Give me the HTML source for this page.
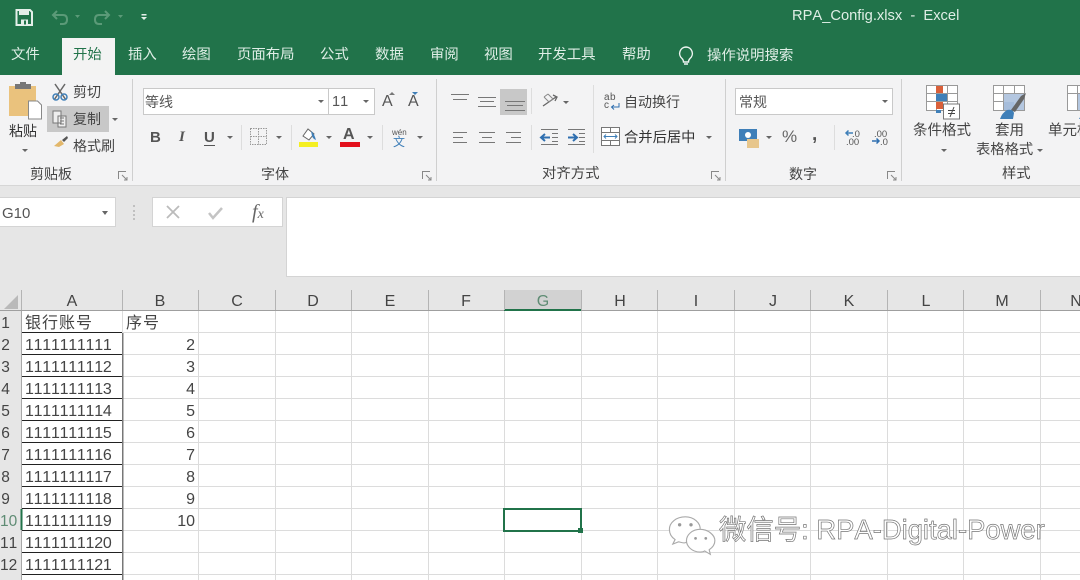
<!DOCTYPE html>
<html><head><meta charset="utf-8">
<style>
html,body{margin:0;padding:0;width:1080px;height:580px;overflow:hidden;background:#fff}
body{font-family:"Liberation Sans","Noto Sans CJK SC",sans-serif;position:relative;font-kerning:none;filter:blur(.3px)}
.t{position:absolute;white-space:nowrap;line-height:1;color:#444;font-size:14px}
.w{color:#dfeee6}
.b{position:absolute}
.ar{position:absolute;width:0;height:0;border-left:3px solid transparent;border-right:3px solid transparent;border-top:3px solid #666}
.h{position:absolute;top:294px;font-size:16px;color:#444;line-height:1;transform:translateX(-50%)}
.r{position:absolute;left:0;font-size:15.500px;color:#444;line-height:1;text-align:center}
.d{position:absolute;left:25px;font-size:16px;color:#444;line-height:1;letter-spacing:-.25px}
.n{position:absolute;width:73px;left:122px;text-align:right;font-size:16px;color:#444;line-height:1}
svg{position:absolute;overflow:visible}
</style></head><body>
<!-- title bar -->
<div class="b" style="left:0;top:0;width:1080px;height:75px;background:#21734a"></div>
<svg style="left:0;top:0" width="300" height="40">
<path d="M16.500 10h13.500l2 2v13h-15.500z" fill="none" stroke="#e4efe9" stroke-width="2"/>
<rect x="19" y="10" width="10" height="5" fill="#e4efe9"/><rect x="21" y="19.500" width="7" height="5" fill="#e4efe9"/><rect x="24" y="20.500" width="2" height="4" fill="#21734a"/>
<path d="M53 15h10q4 0 4 4.500t-4 4.500h-3M57 11l-4 4 4 4" fill="none" stroke="#5b9a78" stroke-width="2"/>
<path d="M109 15H99q-4 0-4 4.500t4 4.500h3M105 11l4 4-4 4" fill="none" stroke="#5b9a78" stroke-width="2"/>
<path d="M75 15h5l-2.500 3zM118 15h5l-2.500 3z" fill="#5b9a78"/>
<path d="M141.500 14h5v1.500h-5zM141 17h6l-3 3z" fill="#e4efe9"/>
</svg>
<div class="t w" style="left:792px;top:9px;font-size:14.700px">RPA_Config.xlsx&nbsp; -&nbsp; Excel</div>
<!-- tabs -->
<div class="b" style="left:62px;top:38px;width:53px;height:37px;background:#f3f3f3"></div>
<div class="t w" style="left:11px;top:48px;font-size:14.400px">文件</div>
<div class="t" style="left:73px;top:48px;font-size:14.400px;color:#21734a">开始</div>
<div class="t w" style="left:128px;top:48px;font-size:14.400px">插入</div>
<div class="t w" style="left:182px;top:48px;font-size:14.400px">绘图</div>
<div class="t w" style="left:237px;top:48px;font-size:14.400px">页面布局</div>
<div class="t w" style="left:320px;top:48px;font-size:14.400px">公式</div>
<div class="t w" style="left:375px;top:48px;font-size:14.400px">数据</div>
<div class="t w" style="left:430px;top:48px;font-size:14.400px">审阅</div>
<div class="t w" style="left:484px;top:48px;font-size:14.400px">视图</div>
<div class="t w" style="left:538px;top:48px;font-size:14.400px">开发工具</div>
<div class="t w" style="left:622px;top:48px;font-size:14.400px">帮助</div>
<svg style="left:676px;top:44px" width="22" height="24"><path d="M10 3a6.500 6.500 0 0 0-4 11.500q1.500 1.500 1.500 3.500h5q0-2 1.500-3.500a6.500 6.500 0 0 0-4-11.500zM8 20h4" fill="none" stroke="#eef5f1" stroke-width="1.400"/></svg>
<div class="t w" style="left:707px;top:49px;font-size:14.400px">操作说明搜索</div>
<!-- ribbon -->
<div class="b" style="left:0;top:75px;width:1080px;height:110px;background:#f3f3f4;border-bottom:1px solid #d6d6d6"></div>
<div class="b" style="left:132px;top:79px;width:1px;height:102px;background:#cfcfcf"></div>
<div class="b" style="left:436px;top:79px;width:1px;height:102px;background:#cfcfcf"></div>
<div class="b" style="left:725px;top:79px;width:1px;height:102px;background:#cfcfcf"></div>
<div class="b" style="left:901px;top:79px;width:1px;height:102px;background:#cfcfcf"></div>
<!-- clipboard -->
<svg style="left:0;top:75px" width="130" height="80">
<rect x="9" y="11" width="27" height="30" fill="#eac27d"/><rect x="15" y="9" width="16" height="5" fill="#777"/><rect x="20" y="7" width="6" height="3" fill="#777"/>
<path d="M28.500 26h9l4 4v14h-13z" fill="#fff" stroke="#888"/>
<path d="M55 9l11 16M65 9L54 25" stroke="#666" stroke-width="1.500" fill="none"/><circle cx="56" cy="22" r="3" fill="none" stroke="#3f7fb8" stroke-width="1.500"/><circle cx="64" cy="22" r="3" fill="none" stroke="#3f7fb8" stroke-width="1.500"/>
<rect x="47" y="31" width="62" height="26" fill="#c8c8c8"/>
<path d="M53 36h8v12h-8zM58 41h8v11h-8z" fill="#eee" stroke="#777"/>
<path d="M60 43h4M60 46h4M60 49h4" stroke="#777"/>
<path d="M54 71l7-6 3 4-5 3z" fill="#e2b76a"/><path d="M62 65l5-4 1 2-4 4z" fill="#555"/>
</svg>
<div class="t" style="left:9px;top:124px;font-size:14px;color:#333">粘贴</div>
<div class="ar" style="left:22px;top:149px"></div>
<div class="t" style="left:73px;top:85px">剪切</div>
<div class="t" style="left:73px;top:112px">复制</div>
<div class="ar" style="left:112px;top:118px"></div>
<div class="t" style="left:73px;top:139px">格式刷</div>
<div class="t" style="left:30px;top:167px">剪贴板</div>
<svg style="left:118px;top:171px" width="10" height="10"><path d="M.5 8V.5H8M4 4l5 5M9 6v3H6" fill="none" stroke="#888"/></svg>
<!-- font -->
<div class="b" style="left:143px;top:88px;width:185px;height:25px;background:#fff;border:1px solid #c9c9c9"></div>
<div class="b" style="left:328px;top:88px;width:45px;height:25px;background:#fff;border:1px solid #c9c9c9"></div>
<div class="t" style="left:145px;top:95px;color:#555">等线</div>
<div class="ar" style="left:318px;top:100px"></div>
<div class="t" style="left:332px;top:95px;font-size:14.500px;color:#555">11</div>
<div class="ar" style="left:363px;top:100px"></div>
<div class="t" style="left:382px;top:94px;font-size:16px;color:#555">A</div>
<div class="t" style="left:408px;top:94px;font-size:16px;color:#555">A</div>
<svg style="left:388px;top:90px" width="36" height="8"><path d="M1 5l3-3 3 3z" fill="#777"/><path d="M24 2h6l-3 3z" fill="#3f7fb8"/></svg>
<div class="t" style="left:150px;top:130px;font-size:15px;font-weight:bold;color:#555">B</div>
<div class="t" style="left:179px;top:130px;font-size:15px;font-style:italic;font-weight:bold;font-family:'Liberation Serif',serif;color:#555">I</div>
<div class="t" style="left:204px;top:130px;font-size:15px;font-weight:bold;color:#555;border-bottom:1.500px solid #555">U</div>
<div class="ar" style="left:227px;top:136px"></div>
<div class="b" style="left:241px;top:125px;width:1px;height:25px;background:#ddd"></div>
<svg style="left:250px;top:128px" width="18" height="18"><path d="M.5.500h16v16H.500zM8.500.500v16M.5 8.500h16" fill="none" stroke="#999" stroke-dasharray="1.500 1"/></svg>
<div class="ar" style="left:276px;top:136px"></div>
<div class="b" style="left:291px;top:125px;width:1px;height:25px;background:#ddd"></div>
<svg style="left:298px;top:126px" width="22" height="22"><path d="M5 10l5-7 6 5-5 6z" fill="#fff" stroke="#666"/><path d="M13 5q3 2 5 9-3-1-4-4z" fill="#3f7fb8"/><rect x="1" y="16" width="19" height="5" fill="#f4ef22"/></svg>
<div class="ar" style="left:326px;top:136px"></div>
<div class="t" style="left:343px;top:127px;font-size:16px;font-weight:bold;color:#555">A</div>
<div class="b" style="left:340px;top:142px;width:20px;height:4.500px;background:#e3101c"></div>
<div class="ar" style="left:367px;top:136px"></div>
<div class="b" style="left:382px;top:125px;width:1px;height:25px;background:#ddd"></div>
<div class="t" style="left:392px;top:129px;font-size:8px;color:#555">wén</div>
<div class="t" style="left:393px;top:136px;font-size:12px;color:#3f7fb8">文</div>
<div class="ar" style="left:417px;top:136px"></div>
<div class="t" style="left:261px;top:167px">字体</div>
<svg style="left:422px;top:171px" width="10" height="10"><path d="M.5 8V.5H8M4 4l5 5M9 6v3H6" fill="none" stroke="#888"/></svg>
<!-- alignment -->
<div class="b" style="left:500px;top:89px;width:27px;height:26px;background:#c8c8c8"></div>
<svg style="left:0;top:0" width="1080" height="160" fill="none" stroke="#777">
<path d="M451 94.500h18M453 99.500h14"/>
<path d="M478 97.500h18M480 101.500h14M478 106.500h18"/>
<path d="M505 101.500h20M507 105.500h16M505 110.500h20"/>
<path d="M453 132.500h14M453 137.500h10M453 142.500h14"/>
<path d="M479 132.500h16M482 137.500h10M479 142.500h16"/>
<path d="M506 132.500h15M511 137.500h10M506 142.500h15"/>
<path d="M543 106l13-9M553 95l4 2-2 4" stroke="#666" stroke-width="1.300"/>
<path d="M544 97l5 5M548 94l5 5M544 97l4-3M549 102l4-3" stroke="#888"/>
<path d="M541 129.500h17M552 133.500h6M552 137.500h6M552 141.500h6M541 144.500h17"/>
<path d="M541 137.500h9M545 134l-4 3.500 4 3.500" stroke="#2f6fb0" stroke-width="2"/>
<path d="M568 129.500h17M579 133.500h6M579 137.500h6M579 141.500h6M568 144.500h17"/>
<path d="M568 137.500h9M573 134l4 3.500-4 3.500" stroke="#2f6fb0" stroke-width="2"/>
</svg>
<div class="ar" style="left:563px;top:101px"></div>
<div class="b" style="left:531px;top:88px;width:1px;height:26px;background:#ddd"></div>
<div class="b" style="left:531px;top:125px;width:1px;height:25px;background:#ddd"></div>
<div class="b" style="left:593px;top:85px;width:1px;height:68px;background:#ddd"></div>
<div class="t" style="left:604px;top:94px;font-size:10px;line-height:8px;color:#555;width:12px;letter-spacing:.5px">ab<br>c</div>
<svg style="left:610px;top:102px" width="10" height="10"><path d="M9 1v4H2M4 3L1.500 5 4 7.500" fill="none" stroke="#2f6fb0"/></svg>
<div class="t" style="left:624px;top:95px">自动换行</div>
<svg style="left:601px;top:127px" width="20" height="20"><path d="M.5.500h18v18H.500zM.5 5.500h18M.5 13.500h18M9.500.500v5M9.500 13.500v5" fill="#fff" stroke="#777"/><path d="M3 9.500h13M5 7.500l-2 2 2 2M14 7.500l2 2-2 2" fill="none" stroke="#3f7fb8"/></svg>
<div class="t" style="left:624px;top:131px;font-size:14.300px;color:#333">合并后居中</div>
<div class="ar" style="left:706px;top:136px"></div>
<div class="t" style="left:542px;top:167px;font-size:14.400px">对齐方式</div>
<svg style="left:711px;top:171px" width="10" height="10"><path d="M.5 8V.5H8M4 4l5 5M9 6v3H6" fill="none" stroke="#888"/></svg>
<!-- number -->
<div class="b" style="left:735px;top:88px;width:156px;height:25px;background:#fff;border:1px solid #c9c9c9"></div>
<div class="t" style="left:739px;top:95px;color:#555">常规</div>
<div class="ar" style="left:882px;top:100px"></div>
<svg style="left:738px;top:127px" width="24" height="22"><rect x="1" y="2" width="18" height="12" fill="#3f7fb8"/><circle cx="10" cy="8" r="3" fill="#fff"/><rect x="9" y="12" width="12" height="9" fill="#e7c68c"/></svg>
<div class="ar" style="left:766px;top:136px"></div>
<div class="t" style="left:782px;top:128px;font-size:17px;color:#666">%</div>
<div class="t" style="left:812px;top:125px;font-size:19px;font-weight:bold;color:#555">,</div>
<div class="b" style="left:834px;top:125px;width:1px;height:25px;background:#ddd"></div>
<div class="t" style="left:852px;top:130px;font-size:9.500px;color:#555">.0</div>
<div class="t" style="left:846px;top:138px;font-size:9.500px;color:#555">.00</div>
<div class="t" style="left:874px;top:130px;font-size:9.500px;color:#555">.00</div>
<div class="t" style="left:880px;top:138px;font-size:9.500px;color:#555">.0</div>
<svg style="left:844px;top:129px" width="40" height="20"><path d="M2 4h7M4.500 1.500L2 4l2.500 2.500" fill="none" stroke="#3f7fb8" stroke-width="1.500"/><path d="M28 12h7M32.500 9.500L35 12l-2.500 2.500" fill="none" stroke="#2f6fb0" stroke-width="1.500"/></svg>
<div class="t" style="left:789px;top:167px">数字</div>
<svg style="left:887px;top:171px" width="10" height="10"><path d="M.5 8V.5H8M4 4l5 5M9 6v3H6" fill="none" stroke="#888"/></svg>
<!-- styles -->
<svg style="left:925px;top:85px" width="155" height="36">
<path d="M1.500.500h31v25h-31zM1.500 8.500h31M1.500 16.500h31M11.500.500v25M22.500.500v25" fill="#fff" stroke="#999"/>
<rect x="11" y="1" width="7" height="7" fill="#d9603a"/><rect x="11" y="9" width="11" height="7" fill="#3f7fb8"/><rect x="11" y="17" width="7" height="7" fill="#d9603a"/><rect x="11" y="25" width="5" height="3" fill="#3f7fb8"/>
<rect x="18.500" y="19" width="16" height="15" fill="#fff" stroke="#777"/>
<path d="M23 28.500h7M23 25.500h7M29 22l-4 10" stroke="#444" fill="none"/>
<path d="M68.500.500h31v25h-31zM68.500 8.500h31M68.500 16.500h31M78.500.500v25M89.500.500v25" fill="#fff" stroke="#999"/>
<rect x="79" y="9" width="20" height="16" fill="#b4c7e0"/><rect x="79" y="17" width="10" height="8" fill="#a6bddb"/>
<path d="M86 25l10-14 5-3-2 6-9 13z" fill="#666"/><path d="M75 34q2-6 7-9 6-1 7 3l-1 6z" fill="#3f7fb8"/>
<path d="M142.500.500h31v25h-31zM142.500 8.500h31M152.500.500v25" fill="#fff" stroke="#999"/><rect x="153" y="9" width="20" height="16" fill="#b4c7e0"/>
<path d="M154 34q2-4 5-6v6z" fill="#3f7fb8"/>
</svg>
<div class="t" style="left:913px;top:124px;font-size:14.500px">条件格式</div>
<div class="ar" style="left:941px;top:149px"></div>
<div class="t" style="left:995px;top:124px;font-size:14.500px">套用</div>
<div class="t" style="left:976px;top:143px;font-size:14.300px">表格格式</div>
<div class="ar" style="left:1037px;top:149px"></div>
<div class="t" style="left:1048px;top:124px;font-size:14.500px">单元格</div>
<div class="t" style="left:1002px;top:167px;font-size:14.300px">样式</div>
<!-- formula bar -->
<div class="b" style="left:0;top:186px;width:1080px;height:104px;background:#e6e6e6"></div>
<div class="b" style="left:0;top:197px;width:116px;height:30px;background:#fff;border-right:1px solid #d4d4d4;border-bottom:1px solid #d4d4d4;border-top:1px solid #d4d4d4;box-sizing:border-box"></div>
<div class="t" style="left:2px;top:206px;font-size:15px;color:#555">G10</div>
<div class="ar" style="left:102px;top:211px;border-left-width:3.500px;border-right-width:3.500px;border-top-width:4px"></div>
<svg style="left:132px;top:205px" width="4" height="16"><path d="M1 1h2M1 6h2M1 10h2M1 14h2" stroke="#999"/></svg>
<div class="b" style="left:152px;top:197px;width:131px;height:30px;background:#fff;border:1px solid #d4d4d4;box-sizing:border-box"></div>
<svg style="left:165px;top:204px" width="60" height="16"><path d="M2 2l12 12M14 2L2 14" stroke="#bbb" stroke-width="1.800" fill="none"/><path d="M44 9l4 5 9-10" stroke="#c4c4c4" stroke-width="2.500" fill="none"/></svg>
<div class="t" style="left:252px;top:202px;font-size:20px;font-style:italic;font-family:'Liberation Serif',serif;color:#666">f<span style="font-size:14px">x</span></div>
<div class="b" style="left:286px;top:197px;width:794px;height:80px;background:#fff;border:1px solid #d4d4d4;border-right:none;box-sizing:border-box"></div>
<!-- headers -->
<div class="b" style="left:0;top:290px;width:1080px;height:20px;background:#e6e6e6;border-bottom:1px solid #9f9f9f"></div>
<div class="b" style="left:0;top:311px;width:21px;height:269px;background:#e6e6e6"></div>
<svg style="left:0;top:290px" width="22" height="22"><path d="M18 5v14H4z" fill="#b9b9b9"/></svg>
<div class="b" style="left:504px;top:290px;width:77px;height:19px;background:#d2d2d2"></div>
<div class="b" style="left:504px;top:309px;width:77px;height:2px;background:#21734a"></div>
<svg style="left:0;top:0;pointer-events:none" width="1080" height="580" shape-rendering="crispEdges">
<g stroke="#b4b4b4"><path d="M21.500 290v20M122.500 290v20M198.500 290v20M275.500 290v20M351.500 290v20M428.500 290v20M504.500 290v20M581.500 290v20M657.500 290v20M734.500 290v20M810.500 290v20M887.500 290v20M963.500 290v20M1040.500 290v20"/></g>
<g stroke="#dcdcdc"><path d="M122.500 311V580M198.500 311V580M275.500 311V580M351.500 311V580M428.500 311V580M504.500 311V580M581.500 311V580M657.500 311V580M734.500 311V580M810.500 311V580M887.500 311V580M963.500 311V580M1040.500 311V580"/>
<path d="M122 332.500H1080M122 354.500H1080M122 376.500H1080M122 398.500H1080M122 420.500H1080M122 442.500H1080M122 464.500H1080M122 486.500H1080M122 508.500H1080M122 530.500H1080M122 552.500H1080M122 574.500H1080"/></g>
<g stroke="#222"><path d="M22 332.500H122M22 354.500H122M22 376.500H122M22 398.500H122M22 420.500H122M22 442.500H122M22 464.500H122M22 486.500H122M22 508.500H122M22 530.500H122M22 552.500H122M22 574.500H122"/></g>
<path d="M122.500 333V580" stroke="#777" stroke-width="1.500"/>
<path d="M21.500 311V580" stroke="#a8a8a8"/>
<path d="M21.500 509V530" stroke="#21734a" stroke-width="2"/>
</svg>
<div class="h" style="left:72px">A</div><div class="h" style="left:160px">B</div><div class="h" style="left:237px">C</div><div class="h" style="left:313px">D</div><div class="h" style="left:390px">E</div><div class="h" style="left:466px">F</div><div class="h" style="left:543px;color:#5f8c74">G</div><div class="h" style="left:620px">H</div><div class="h" style="left:696px">I</div><div class="h" style="left:773px">J</div><div class="h" style="left:849px">K</div><div class="h" style="left:926px">L</div><div class="h" style="left:1002px">M</div><div class="h" style="left:1076px">N</div>
<div class="r" style="top:316px;width:11px">1</div><div class="r" style="top:338px;width:11px">2</div><div class="r" style="top:360px;width:11px">3</div><div class="r" style="top:382px;width:11px">4</div><div class="r" style="top:404px;width:11px">5</div><div class="r" style="top:426px;width:11px">6</div><div class="r" style="top:448px;width:11px">7</div><div class="r" style="top:470px;width:11px">8</div><div class="r" style="top:492px;width:11px">9</div><div class="r" style="top:514px;width:16px;color:#5f8c74">10</div><div class="r" style="top:536px;width:16px">11</div><div class="r" style="top:558px;width:16px">12</div>
<div class="d" style="top:316px;letter-spacing:1px;font-size:16px">银行账号</div>
<div class="d" style="top:338px">1111111111</div><div class="d" style="top:360px">1111111112</div><div class="d" style="top:382px">1111111113</div><div class="d" style="top:404px">1111111114</div><div class="d" style="top:426px">1111111115</div><div class="d" style="top:448px">1111111116</div><div class="d" style="top:470px">1111111117</div><div class="d" style="top:492px">1111111118</div><div class="d" style="top:514px">1111111119</div><div class="d" style="top:536px">1111111120</div><div class="d" style="top:558px">1111111121</div>
<div class="t" style="left:126px;top:316px;font-size:16px;letter-spacing:1px">序号</div>
<div class="n" style="top:338px">2</div><div class="n" style="top:360px">3</div><div class="n" style="top:382px">4</div><div class="n" style="top:404px">5</div><div class="n" style="top:426px">6</div><div class="n" style="top:448px">7</div><div class="n" style="top:470px">8</div><div class="n" style="top:492px">9</div><div class="n" style="top:514px">10</div>
<!-- selection -->
<div class="b" style="left:503px;top:508px;width:79px;height:24px;border:2px solid #21734a;box-sizing:border-box"></div>
<div class="b" style="left:578px;top:528px;width:5px;height:5px;background:#21734a;border:0"></div>
<!-- watermark -->
<svg style="left:666px;top:514px" width="50" height="42" fill="#fff" stroke="#aaa" viewBox="0 0 44 36">
<path d="M17 2c-8 0-14 5-14 11 0 4 2 7 5 9l-2 4 5-2c1 0 3 1 5 1 3 0 3-3 4-5 2-4 7-6 10-6 1-7-6-12-13-12z"/>
<path d="M30 13c-7 0-12 5-12 10s5 10 12 10c2 0 3 0 4-1l5 3-1-4c3-2 5-5 5-8 0-5-6-10-13-10z"/>
<g fill="#999" stroke="none"><circle cx="12" cy="9" r="1.500"/><circle cx="22" cy="9" r="1.500"/><circle cx="26" cy="21" r="1.200"/><circle cx="35" cy="21" r="1.200"/></g>
</svg>
<div class="t" style="left:719px;top:516px;font-size:27.400px;color:#fff;-webkit-text-stroke:.7px #777">微信号: RPA-Digital-Power</div>
</body></html>
